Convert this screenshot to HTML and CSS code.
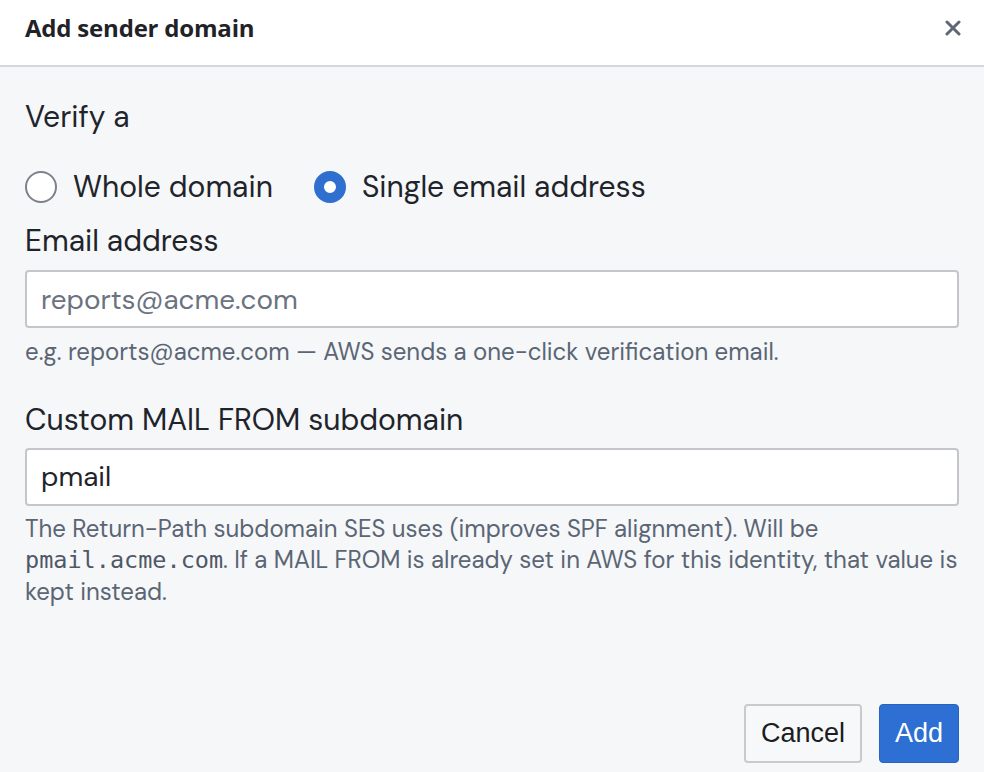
FILE: index.html
```html
<!DOCTYPE html>
<html lang="en">
<head>
<meta charset="utf-8">
<title>Add sender domain</title>
<link rel="stylesheet" href="styles.css">
</head>
<body>
<div class="dialog">
  <header class="dialog-header">
    <h1 class="dialog-title">Add sender domain</h1>
    <button class="close-btn" aria-label="Close">
      <svg width="16" height="16" viewBox="0 0 16 16"><path d="M2 2 L14 14 M14 2 L2 14" stroke="#5f6676" stroke-width="3" stroke-linecap="round"/></svg>
    </button>
  </header>
  <main class="dialog-body">
    <div class="section-label">Verify a</div>
    <div class="radio-row">
      <label class="radio"><span class="radio-dot"></span><span class="radio-text">Whole domain</span></label>
      <label class="radio"><span class="radio-dot checked"></span><span class="radio-text">Single email address</span></label>
    </div>
    <div class="field-label">Email address</div>
    <div class="input"><span class="placeholder">reports@acme.com</span></div>
    <p class="help">e.g. reports@acme.com — AWS sends a one-click verification email.</p>
    <div class="field-label second">Custom MAIL FROM subdomain</div>
    <div class="input"><span class="value">pmail</span></div>
    <p class="help multi">The Return-Path subdomain SES uses (improves SPF alignment). Will be <code class="mono">pmail.acme.com</code>. If a MAIL FROM is already set in AWS for this identity, that value is kept instead.</p>
  </main>
  <footer class="dialog-footer">
    <button class="btn btn-secondary">Cancel</button>
    <button class="btn btn-primary">Add</button>
  </footer>
</div>
</body>
</html>
```

FILE: styles.css
```css
html, body {
  margin: 0;
  padding: 0;
  height: 100%;
}
body {
  background: #f5f7f9;
  font-family: "DM Sans", Inter, "Noto Sans", sans-serif;
  color: #1f242b;
}
.dialog {
  display: flex;
  flex-direction: column;
  height: 100vh;
}
.dialog-header {
  background: #ffffff;
  height: 65px;
  border-bottom: 2px solid #d4d7db;
  display: flex;
  align-items: flex-start;
  justify-content: space-between;
  padding: 0 23px 0 25px;
  box-sizing: content-box;
}
.dialog-title {
  margin: 10px 0 0 0;
  font-family: "Open Sans", "Noto Sans", sans-serif;
  font-weight: 700;
  font-size: 24px;
  line-height: 36px;
  color: #1f2328;
  letter-spacing: -0.2px;
}
.close-btn {
  margin-top: 20px;
  border: 0;
  background: none;
  padding: 0;
  width: 16px;
  height: 16px;
  display: flex;
}
.dialog-body {
  padding: 30px 25px 0 25px;
  display: flex;
  flex-direction: column;
}
.section-label {
  font-size: 30px;
  line-height: 40px;
}
.radio-row {
  margin-top: 30px;
  display: flex;
  gap: 41px;
  height: 40px;
  align-items: center;
}
.radio {
  display: flex;
  align-items: center;
  gap: 16px;
}
.radio-dot {
  width: 32px;
  height: 32px;
  border-radius: 50%;
  box-sizing: border-box;
  border: 2px solid #7d828a;
  background: #ffffff;
}
.radio-dot.checked {
  border: 10px solid #2e6fd0;
  background: #ffffff;
}
.radio-text {
  font-size: 30px;
  line-height: 40px;
}
.field-label {
  margin-top: 14px;
  font-size: 30px;
  line-height: 40px;
}
.field-label.second {
  margin-top: 32px;
}
.input {
  margin-top: 9px;
  height: 58px;
  box-sizing: border-box;
  border: 2px solid #c3c6ca;
  border-radius: 4px;
  background: #ffffff;
  display: flex;
  align-items: center;
  padding: 0 14px;
  font-size: 27.8px;
}
.field-label.second + .input {
  margin-top: 8px;
}
.placeholder {
  color: #6b7280;
}
.value {
  color: #1f242b;
}
.help {
  margin: 8px 0 0 0;
  font-size: 24px;
  line-height: 31.5px;
  color: #5b6574;
}
.help.multi {
  margin-top: 7px;
}
.mono {
  font-family: "DejaVu Sans Mono", "Liberation Mono", monospace;
  font-size: 23.5px;
  line-height: 1;
  color: #4f5866;
}
.dialog-footer {
  margin-top: auto;
  display: flex;
  justify-content: flex-end;
  gap: 17px;
  padding: 0 25px 9px 25px;
}
.btn {
  height: 59px;
  font-family: "Liberation Sans", Arial, sans-serif;
  font-size: 27px;
  border-radius: 4px;
  padding: 0 15px;
  box-sizing: border-box;
}
.btn-secondary {
  background: #f7f8f9;
  border: 2px solid #c9cacc;
  color: #1c1c1e;
}
.btn-primary {
  background: #2d6fd3;
  border: 1px solid #2863c0;
  color: #ffffff;
}
```
